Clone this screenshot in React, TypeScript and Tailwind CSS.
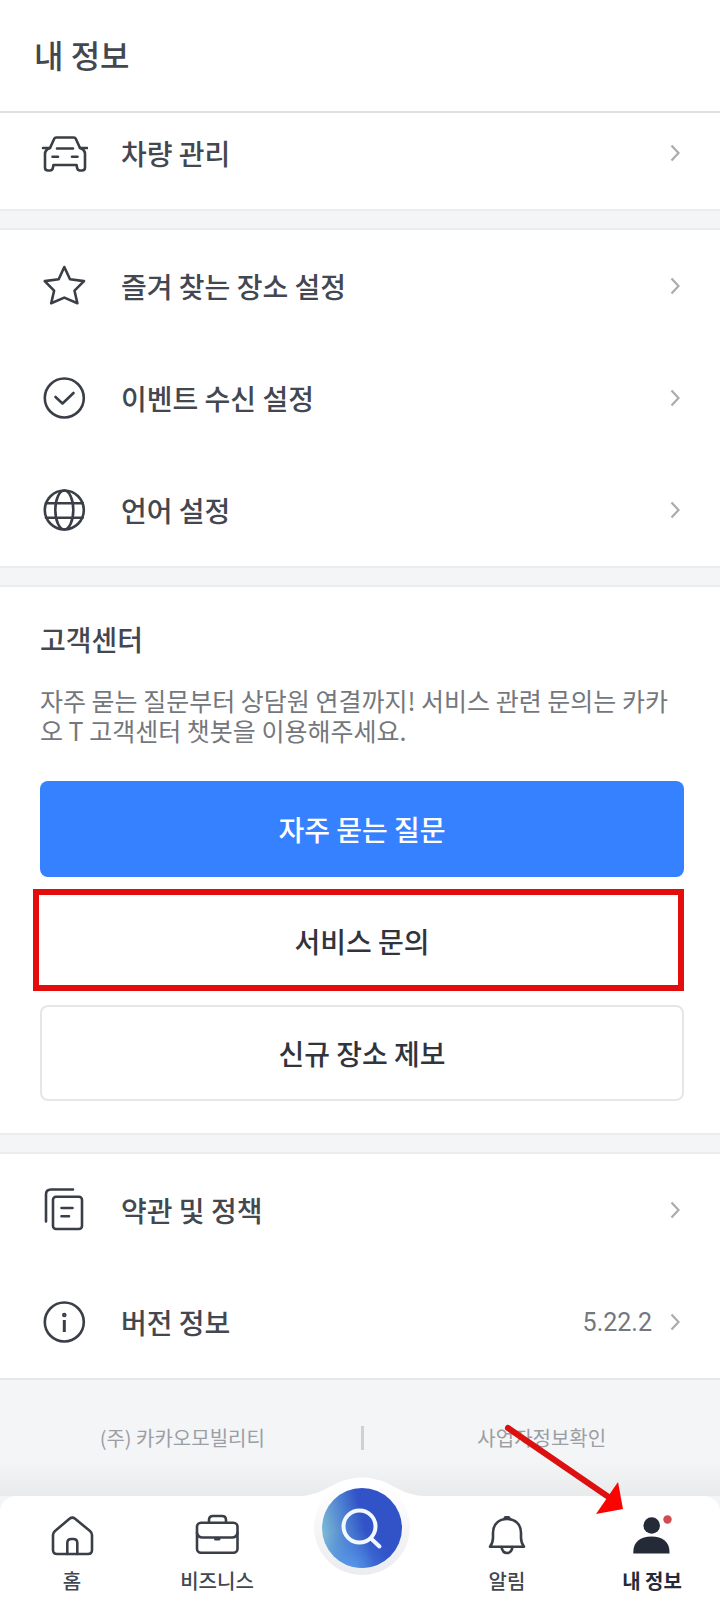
import type { ReactNode } from "react";

type MenuItem = {
  label: string;
  icon: ReactNode;
  value?: string;
};

const CarIcon = () => (
  <>
    <path d="M3 19h7l4.200-9.200q.6-1.300 2-1.300h17.600q1.400 0 2 1.300L40 19h7" />
    <path d="M10 19c-3 1-5 3-5 6v13.500q0 3 3 3h2q2.500 0 3-3l.4-2.500h23.200l.4 2.500q.5 3 3 3h2q3 0 3-3V25c0-3-2-5-5-6" />
    <path d="M17 19.500h16M12.500 27.700h5.500M32 27.700h5.500" />
  </>
);

const StarIcon = () => (
  <path d="M24.300 5l5.700 12.200 14 1.900-9.500 9.600 2.900 12.500-13.100-5.600-13.100 5.600 2.900-12.500L4.700 19.100l14-1.900z" />
);

const CheckIcon = () => (
  <>
    <circle cx="24.300" cy="24" r="19.500" />
    <path d="M15.500 23l7 6.500 11-10.500" />
  </>
);

const GlobeIcon = () => (
  <>
    <circle cx="24.300" cy="24" r="19.500" />
    <ellipse cx="24.300" cy="24" rx="9" ry="19.500" />
    <path d="M6 17.300h36.600M6 31.700h36.600" />
  </>
);

const PolicyIcon = () => (
  <>
    <rect x="13" y="10.700" width="29" height="32.300" rx="3" />
    <path d="M33 3.500H11q-5 0-5 5v27M21.500 22h11M21.500 30.300h7.500" />
  </>
);

const InfoIcon = () => (
  <>
    <circle cx="24.300" cy="24" r="19.500" />
    <circle cx="24.300" cy="17" r="1" />
    <path strokeWidth="3" strokeLinecap="butt" d="M24.300 22v12" />
  </>
);

const HomeIcon = () => (
  <>
    <path d="M21.500 6.800q2.800-2.300 5.600 0L42 19q2 1.700 2 4v15q0 4-4 4H9q-4 0-4-4V23q0-2.300 2-4z" />
    <path d="M19.300 42V31q0-4 4-4h2q4 0 4 4v11" />
  </>
);

const BriefcaseIcon = () => (
  <>
    <rect x="4" y="10.700" width="40.500" height="30" rx="4" />
    <path d="M16 10.500V8q0-4 4-4h9q4 0 4 4v2.500M4 21q1 4.500 5.500 4.500H39q4.500 0 5.500-4.500" />
    <path strokeWidth="3" d="M22.500 27h3.500" />
  </>
);

const BellIcon = () => (
  <>
    <path d="M7 34.700h34q-3-4-3-9V21C38 12 32 7 24 7S10 12 10 21v4.700q0 5-3 9z" />
    <path d="M18.500 35q1 6 5.500 6t5.500-6" />
    <path strokeWidth="4" d="M22.500 6h3" />
  </>
);

const PersonIcon = () => (
  <g stroke="none">
    <circle cx="23.700" cy="13.500" r="8.300" fill="#242a38" />
    <path d="M5.300 41.500V40c0-10 7-15.500 18.200-15.500S41.500 30 41.500 40v1.500z" fill="#242a38" />
    <circle cx="39.500" cy="7.500" r="4.200" fill="#d14b50" />
  </g>
);

const Icon = ({ children }: { children: ReactNode }) => (
  <svg
    viewBox="0 0 48 48"
    className="size-12 shrink-0"
    fill="none"
    stroke="#3a3e47"
    strokeWidth="2.600"
    strokeLinecap="round"
    strokeLinejoin="round"
    aria-hidden="true"
  >
    {children}
  </svg>
);

const PLACES: MenuItem[] = [
  { label: "즐겨 찾는 장소 설정", icon: <StarIcon /> },
  { label: "이벤트 수신 설정", icon: <CheckIcon /> },
  { label: "언어 설정", icon: <GlobeIcon /> },
];

const ABOUT: MenuItem[] = [
  { label: "약관 및 정책", icon: <PolicyIcon /> },
  { label: "버전 정보", icon: <InfoIcon />, value: "5.22.2" },
];

function MenuRow({ label, icon, value }: MenuItem) {
  return (
    <a href="#" className="flex h-28 items-center px-10">
      <Icon>{icon}</Icon>
      <span className="ml-[33px] flex-1 text-[28px] leading-10">{label}</span>
      {value && (
        <span className="mr-[18px] pt-[2px] font-['Roboto',sans-serif] text-[25px] leading-10 font-normal text-[#74777c]">
          {value}
        </span>
      )}
      <svg
        viewBox="0 0 10 18"
        className="h-[18px] w-[10px]"
        fill="none"
        stroke="#a9abae"
        strokeWidth="2.200"
        aria-hidden="true"
      >
        <path d="M1.500 1.500L8.500 9l-7 7.500" />
      </svg>
    </a>
  );
}

const Divider = () => <div className="h-[21px] border-y-2 border-[#ebecee] bg-[#f4f5f7]" />;

function NavItem({ label, icon, active }: { label: string; icon: ReactNode; active?: boolean }) {
  return (
    <a href="#" className="flex flex-col items-center gap-[9px] pt-4">
      <Icon>{icon}</Icon>
      <span className={active ? "text-[20px] leading-6 font-bold text-[#242a38]" : "text-[20px] leading-6"}>
        {label}
      </span>
    </a>
  );
}

function BottomNav() {
  return (
    <nav className="relative rounded-t-2xl bg-white">
      {/* raised hump behind the search button */}
      <div className="absolute inset-x-0 -top-5 flex justify-center pl-1">
        <svg viewBox="0 0 140 110" className="h-[110px] w-[140px]" aria-hidden="true">
          <defs>
            <linearGradient id="halo" x1="0" y1="0" x2="0" y2="1">
              <stop offset="0.1" stopColor="#fff" />
              <stop offset="0.5" stopColor="#f6f6f9" />
              <stop offset="1" stopColor="#ebecef" />
            </linearGradient>
          </defs>
          <path d="M0 20.500C22 20.500 32 14 45 7Q70-4 95 7C108 14 118 20.500 140 20.500V40H0z" fill="#fff" />
          <circle cx="70" cy="51" r="48" fill="url(#halo)" />
        </svg>
      </div>
      <div className="relative grid h-[110px] grid-cols-5 gap-[9px] pl-1">
        <NavItem label="홈" icon={<HomeIcon />} />
        <NavItem label="비즈니스" icon={<BriefcaseIcon />} />
        <button type="button" aria-label="검색" className="-mt-2 flex items-start justify-center">
          <svg viewBox="0 0 80 80" className="size-20" fill="none">
            <defs>
              <linearGradient id="search" x1="0" y1="0.45" x2="0.62" y2="0.3">
                <stop offset="0" stopColor="#7ab6d4" />
                <stop offset="0.45" stopColor="#4d80d2" />
                <stop offset="0.8" stopColor="#3153c7" />
              </linearGradient>
              <radialGradient id="glow" cx="0.35" cy="1.050" r="0.55">
                <stop offset="0" stopColor="#5b9df0" />
                <stop offset="1" stopColor="#3f74d8" stopOpacity="0" />
              </radialGradient>
            </defs>
            <circle cx="40" cy="40" r="40" fill="url(#search)" />
            <circle cx="40" cy="40" r="40" fill="url(#glow)" />
            <circle cx="37.500" cy="38.500" r="16" stroke="#f1f8ff" strokeWidth="4" />
            <path d="M49 50.500l8.500 8" stroke="#f1f8ff" strokeWidth="4" strokeLinecap="round" />
          </svg>
        </button>
        <NavItem label="알림" icon={<BellIcon />} />
        <NavItem label="내 정보" icon={<PersonIcon />} active />
      </div>
      {/* pointer to the profile tab */}
      <svg
        viewBox="0 0 124 92"
        className="pointer-events-none absolute -top-[73px] right-[92px] h-[92px] w-[124px]"
        aria-hidden="true"
      >
        <path d="M4 5l102 70" stroke="#dc100e" strokeWidth="6" strokeLinecap="round" />
        <path d="M114 59l5 27-27 5z" fill="#fa0300" />
      </svg>
    </nav>
  );
}

export default function App() {
  return (
    <div className="flex min-h-screen flex-col bg-[#f4f5f7] font-['Noto_Sans_CJK_KR',sans-serif] font-medium text-[#43474f]">
      <header className="relative z-10 flex h-[113px] items-center border-b-2 border-[#dfe0e1] bg-white px-[34px] pb-1">
        <h1 className="text-[32px] leading-10">내 정보</h1>
      </header>

      <main className="flex-1">
        <section className="-mt-4 bg-white">
          <MenuRow label="차량 관리" icon={<CarIcon />} />
        </section>
        <Divider />

        <section className="bg-white">
          {PLACES.map((item) => (
            <MenuRow key={item.label} {...item} />
          ))}
        </section>
        <Divider />

        <section className="bg-white pt-8 pr-9 pb-8 pl-10">
          <h2 className="text-[28px] leading-10">고객센터</h2>
          <p className="mt-[26px] text-[25px] leading-[30px] font-normal break-all text-[#74777c]">
            자주 묻는 질문부터 상담원 연결까지! 서비스 관련 문의는 카카오 T 고객센터 챗봇을 이용해주세요.
          </p>
          <div className="mt-9 flex flex-col gap-4 text-[28px] text-[#30343d]">
            <button type="button" className="h-24 rounded-lg bg-[#3681ff] text-white">
              자주 묻는 질문
            </button>
            <div className="relative flex flex-col">
              <button type="button" className="h-24 rounded-lg bg-white">
                서비스 문의
              </button>
              <div className="pointer-events-none absolute -top-1 right-0 -bottom-[2px] -left-[7px] border-[6px] border-[#e30d0d]" />
            </div>
            <button type="button" className="h-24 rounded-lg border-2 border-[#e5e6e8] bg-white">
              신규 장소 제보
            </button>
          </div>
        </section>
        <Divider />

        <section className="border-b-2 border-[#e6e7e9] bg-white">
          {ABOUT.map((item) => (
            <MenuRow key={item.label} {...item} />
          ))}
        </section>
      </main>

      <footer className="grid h-[116px] grid-cols-[1fr_auto_1fr] items-center bg-linear-to-b from-[#f4f5f7] from-70% to-[#e9eaec] pl-1 text-[20px] leading-6 font-normal text-[#9b9ea3]">
        <span className="text-center">(주) 카카오모빌리티</span>
        <span className="h-6 w-[3px] bg-[#cfd0d2]" />
        <a href="#" className="text-center">
          사업자정보확인
        </a>
      </footer>
      <BottomNav />
    </div>
  );
}
